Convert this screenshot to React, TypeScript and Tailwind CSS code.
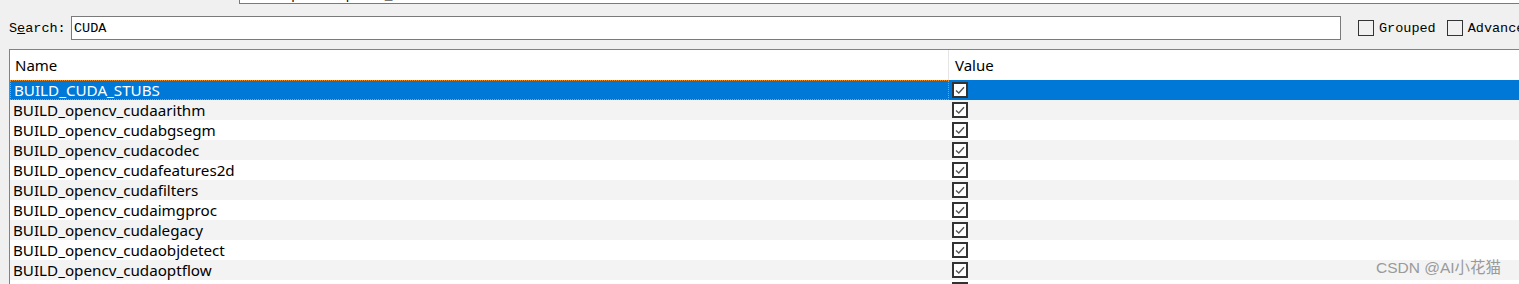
import React from "react";

const rows = [
  "BUILD_CUDA_STUBS",
  "BUILD_opencv_cudaarithm",
  "BUILD_opencv_cudabgsegm",
  "BUILD_opencv_cudacodec",
  "BUILD_opencv_cudafeatures2d",
  "BUILD_opencv_cudafilters",
  "BUILD_opencv_cudaimgproc",
  "BUILD_opencv_cudalegacy",
  "BUILD_opencv_cudaobjdetect",
  "BUILD_opencv_cudaoptflow",
  "BUILD_opencv_cudastereo",
];

function Check() {
  return (
    <div className="w-[16px] h-[16px] border-2 border-[#333333] bg-white flex items-center justify-center">
      <svg width="12" height="12" viewBox="0 0 12 12">
        <path d="M2 6.5 L4.8 9 L10 3.2" fill="none" stroke="#555555" strokeWidth="1.4" />
      </svg>
    </div>
  );
}

export default function App() {
  return (
    <div className="w-[1519px] h-[284px] overflow-hidden bg-[#f0f0f0] relative" style={{ fontFamily: "'Noto Sans', sans-serif" }}>
      <div className="h-[4px] ml-[239px] border-l border-b border-[#7a7a7a] bg-white overflow-hidden">
        <div className="-mt-[12px] pl-[20px] font-['Liberation_Mono',monospace] text-[13px] leading-[15px] text-black">
          C:/opencv/opencv_build
        </div>
      </div>
      <div className="flex items-center h-[24px] mt-[12px] font-['Liberation_Mono',monospace] text-[13.5px] text-black whitespace-nowrap">
        <span className="ml-[9px] w-[62px] shrink-0 pt-[3px]">
          S<span className="underline">e</span>arch:
        </span>
        <div className="w-[1270px] shrink-0 h-[24px] border border-[#7a7a7a] bg-white flex items-center pl-[2px] pt-[2px]">CUDA</div>
        <div className="ml-[17px] shrink-0 w-[16px] h-[16px] border border-[#333333]" />
        <span className="ml-[5px] shrink-0 pt-[2px]">Grouped</span>
        <div className="ml-[11px] shrink-0 w-[16px] h-[16px] border border-[#333333]" />
        <span className="ml-[5px] shrink-0 pt-[2px]">Advanced</span>
      </div>
      <div className="ml-[9px] mt-[9px] border-t border-l border-[#828282] bg-white">
        <div className="flex h-[30px] items-center text-[15px] text-black">
          <div className="w-[939px] h-full flex items-center pl-[5px] border-r border-[#e5e5e5]">Name</div>
          <div className="pl-[6px]">Value</div>
        </div>
        {rows.map((r, i) => {
          const sel = i === 0;
          const bg = sel ? "bg-[#0078d7] text-white" : i % 2 === 1 ? "bg-[#f3f3f3] text-black" : "bg-white text-black";
          return (
            <div key={r} className={`flex h-[20px] items-center text-[15.2px] ${bg}`}>
              <div className={`w-[939px] h-full flex items-center pl-[3px] ${sel ? "border border-dotted border-[#f08a24]" : ""}`}>{r}</div>
              <div className="pl-[3px]">
                <Check />
              </div>
            </div>
          );
        })}
      </div>
      <div className="absolute left-[1376px] top-[256px] text-[15.5px] text-[#9a9a9a]" style={{ fontFamily: "'Liberation Sans', 'Noto Sans CJK SC', sans-serif" }}>
        CSDN @AI小花猫
      </div>
    </div>
  );
}
